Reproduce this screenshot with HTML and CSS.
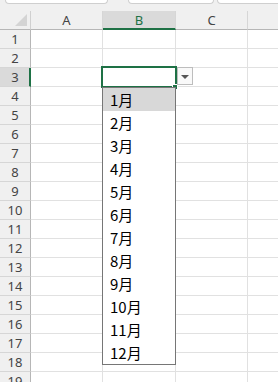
FILE: index.html
```html
<!DOCTYPE html>
<html lang="ja">
<head>
  <meta charset="UTF-8">
  <title>Sheet</title>
  <link rel="stylesheet" href="styles.css">
</head>
<body>

  <div class="topbar">
    <div class="tab tab-wide"></div>
    <div class="tab tab-mid"></div>
    <div class="tab tab-rest"></div>
  </div>

  <div class="sheet">
    <div class="grid">
      <div class="corner">
        <svg width="12" height="12" viewBox="0 0 12 12"><polygon points="12,0 12,12 0,12" fill="#d4d4d4"/></svg>
      </div>
      <div class="colhead">A</div>
      <div class="colhead active">B</div>
      <div class="colhead">C</div>
      <div class="colhead last"></div>
    </div>
    <div id="rows"></div>

    <div class="selection"></div>
    <div class="fill-handle"></div>
    <div class="dd-button"><span class="caret"></span></div>

    <ul class="dropdown">
      <li class="hover">1月</li>
      <li>2月</li>
      <li>3月</li>
      <li>4月</li>
      <li>5月</li>
      <li>6月</li>
      <li>7月</li>
      <li>8月</li>
      <li>9月</li>
      <li>10月</li>
      <li>11月</li>
      <li>12月</li>
    </ul>
  </div>

  <script>
    const rows = document.getElementById('rows');
    for (let i = 1; i <= 19; i++) {
      const row = document.createElement('div');
      row.className = 'grid';
      row.innerHTML =
        '<div class="rowhead' + (i === 3 ? ' active' : '') + '">' + i + '</div>' +
        '<div class="cell"></div><div class="cell"></div><div class="cell"></div><div class="cell last"></div>';
      rows.appendChild(row);
    }
  </script>

</body>
</html>
```

FILE: styles.css
```css
body {
  margin: 0;
  background: #fff;
  font-family: 'Noto Sans', sans-serif;
  overflow: hidden;
}

.topbar {
  display: flex;
  height: 11px;
  background: #f0f0f0;
  padding-left: 5px;
  box-sizing: border-box;
}

.tab {
  height: 4px;
  background: #fff;
  border: 1px solid #cfcfcf;
  border-top: none;
  border-radius: 0 0 4px 4px;
  box-sizing: border-box;
}

.tab-wide { width: 103px; margin-right: 20px; }
.tab-mid { width: 86px; margin-right: 3px; }
.tab-rest { flex: 1; margin-right: -10px; }

.sheet {
  position: relative;
}

.grid {
  display: grid;
  grid-template-columns: 31px 72px 73px 72px 1fr;
}

.corner,
.colhead {
  height: 19px;
  background: #f0f0f0;
  border-bottom: 1px solid #b6b6b6;
  box-sizing: border-box;
}

.corner {
  border-right: 1px solid #d0d0d0;
  display: flex;
  align-items: flex-end;
  justify-content: flex-end;
  padding: 0 3px 3px 0;
}

.corner svg { display: block; }

.colhead {
  border-right: 1px solid #d6d6d6;
  font-size: 13px;
  line-height: 18px;
  color: #444;
  text-align: center;
}

.colhead.active {
  background: #dadada;
  color: #1e7145;
  border-bottom: 2px solid #1e7145;
}

.colhead.last { border-right: none; }

.rowhead {
  height: 19px;
  background: #f0f0f0;
  border-right: 1px solid #b6b6b6;
  border-bottom: 1px solid #d6d6d6;
  box-sizing: border-box;
  font-size: 13px;
  line-height: 19px;
  color: #444;
  text-align: center;
}

.rowhead.active {
  background: #dadada;
  border-right: 2px solid #1e7145;
  padding-left: 1px;
}

.cell {
  height: 19px;
  border-right: 1px solid #e1e1e1;
  border-bottom: 1px solid #e1e1e1;
  box-sizing: border-box;
}

.cell.last { border-right: none; }

.selection {
  position: absolute;
  left: 101px;
  top: 55px;
  width: 76px;
  height: 22px;
  border: 2px solid #1e7145;
  box-sizing: border-box;
}

.fill-handle {
  position: absolute;
  left: 172px;
  top: 73px;
  width: 6px;
  height: 6px;
  background: #1e7145;
  border: 1px solid #fff;
  box-sizing: border-box;
}

.dd-button {
  position: absolute;
  left: 177px;
  top: 56px;
  width: 16px;
  height: 18px;
  background: #f9f9f9;
  border: 1px solid #bdbdbd;
  box-sizing: border-box;
  display: flex;
  align-items: center;
  justify-content: center;
}

.caret {
  width: 0;
  height: 0;
  border-left: 4px solid transparent;
  border-right: 4px solid transparent;
  border-top: 4px solid #555;
  margin-top: 1px;
}

.dropdown {
  position: absolute;
  left: 102px;
  top: 76px;
  width: 74px;
  margin: 0;
  padding: 0;
  list-style: none;
  background: #fff;
  border: 1px solid #767676;
  box-sizing: border-box;
}

.dropdown li {
  height: 23px;
  line-height: 23px;
  padding-left: 7px;
  font-family: 'Noto Sans CJK JP', sans-serif;
  font-size: 15px;
  color: #000;
}

.dropdown li.hover {
  background: #d8d8d8;
}
```
